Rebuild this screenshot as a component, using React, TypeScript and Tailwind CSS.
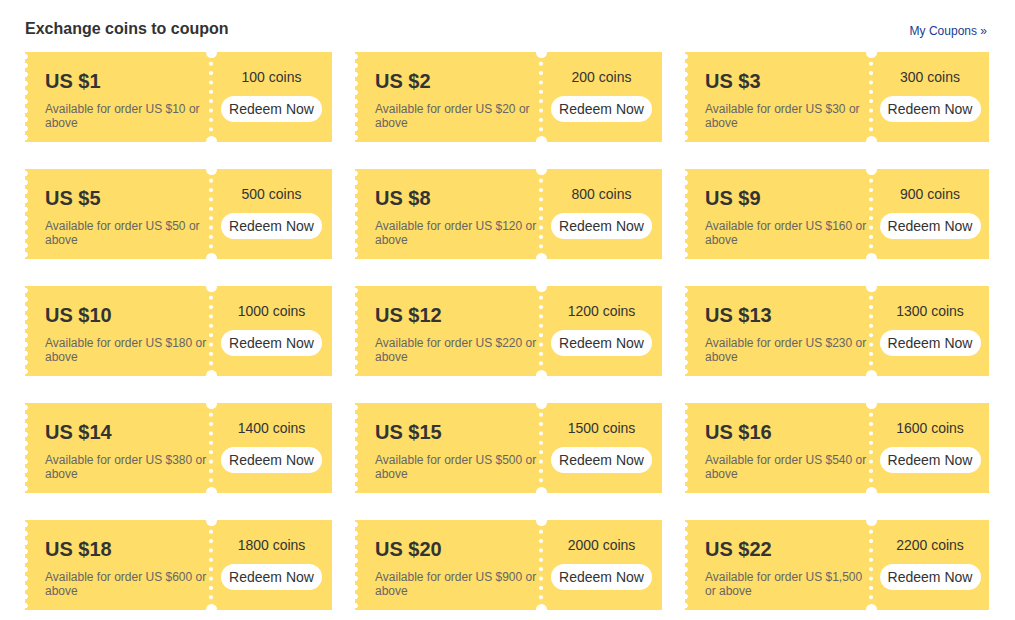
import React from 'react';

type Coupon = { value: string; min: string; coins: number };

const coupons: Coupon[] = [
  { value: '1', min: '10', coins: 100 },
  { value: '2', min: '20', coins: 200 },
  { value: '3', min: '30', coins: 300 },
  { value: '5', min: '50', coins: 500 },
  { value: '8', min: '120', coins: 800 },
  { value: '9', min: '160', coins: 900 },
  { value: '10', min: '180', coins: 1000 },
  { value: '12', min: '220', coins: 1200 },
  { value: '13', min: '230', coins: 1300 },
  { value: '14', min: '380', coins: 1400 },
  { value: '15', min: '500', coins: 1500 },
  { value: '16', min: '540', coins: 1600 },
  { value: '18', min: '600', coins: 1800 },
  { value: '20', min: '900', coins: 2000 },
  { value: '22', min: '1,500', coins: 2200 },
];

function CouponCard({ coupon }: { coupon: Coupon }) {
  return (
    <div className="relative flex h-[90px] bg-[#fedd68] overflow-hidden">
      {/* scalloped left edge */}
      <div className="absolute left-0 top-0 h-full w-[3px] bg-[radial-gradient(circle_at_0_50%,#fff_2.5px,transparent_3px)] bg-[length:6px_9px]" />
      {/* notches */}
      <div className="absolute left-[181px] -top-[5px] w-[11px] h-[11px] rounded-full bg-white" />
      <div className="absolute left-[181px] -bottom-[5px] w-[11px] h-[11px] rounded-full bg-white" />
      {/* dotted divider */}
      <div className="absolute left-[184px] top-[7px] h-[75px] w-[4px] bg-[radial-gradient(circle,#fff_1.8px,transparent_2.2px)] bg-[length:4px_9.375px]" />

      <div className="w-[186px] shrink-0 pl-5 pr-1 pt-[17px]">
        <div className="text-[20px] leading-[24px] font-bold text-[#333]">US ${coupon.value}</div>
        <div className="mt-[9px] text-[12px] leading-[14px] text-[#666]">
          Available for order US ${coupon.min} or above
        </div>
      </div>
      <div className="flex-1 flex flex-col items-center pt-[15px]">
        <div className="text-[14px] leading-[20px] text-[#333]">{coupon.coins} coins</div>
        <button className="mt-[9px] h-[26px] w-[101px] rounded-full bg-white text-[14px] text-[#333]">
          Redeem Now
        </button>
      </div>
    </div>
  );
}

export default function App() {
  return (
    <div className="min-h-screen bg-white px-[25px] pt-[18px] font-['Liberation_Sans',Arial,sans-serif]">
      <div className="w-[964px]">
        <div className="flex items-center justify-between h-[22px]">
          <h2 className="text-[16px] leading-[20px] font-bold text-[#333]">Exchange coins to coupon</h2>
          <a className="text-[12px] leading-[16px] text-[#1a3d8f] mr-[2px] mt-[3px]" href="#">
            My Coupons <span className="text-[12px]">»</span>
          </a>
        </div>
        <div className="mt-[12px] grid grid-cols-[307px_307px_304px] gap-x-[23px] gap-y-[27px] overflow-hidden">
          {coupons.map((c) => (
            <CouponCard key={c.value} coupon={c} />
          ))}
        </div>
      </div>
    </div>
  );
}
